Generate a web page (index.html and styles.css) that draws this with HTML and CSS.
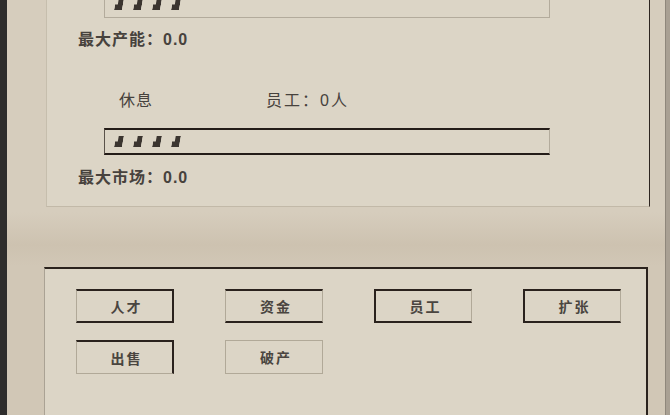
FILE: index.html
```html
<!DOCTYPE html>
<html lang="zh">

<head>
    <meta charset="UTF-8">
    <title>公司</title>
    <link rel="stylesheet" href="styles.css">
</head>

<body>
    <div class="edge-left"></div>

    <div class="main">
        <!-- 生产面板 -->
        <div class="panel-top">
            <div class="bar">
                <span class="mark"></span><span class="mark"></span><span class="mark"></span><span class="mark"></span>
            </div>
            <div class="stat stat-first">最大产能：0.0</div>

            <div class="status-row">
                <span class="status">休息</span>
                <span class="staff">员工：0人</span>
            </div>
            <div class="bar bar-dark">
                <span class="mark"></span><span class="mark"></span><span class="mark"></span><span class="mark"></span>
            </div>
            <div class="stat">最大市场：0.0</div>
        </div>

        <!-- 操作按钮 -->
        <div class="panel-bottom">
            <div class="btn-grid">
                <div class="btn b-right">人才</div>
                <div class="btn b-tb">资金</div>
                <div class="btn b-left">员工</div>
                <div class="btn b-left">扩张</div>
                <div class="btn b-tr">出售</div>
                <div class="btn">破产</div>
            </div>
        </div>
    </div>

    <div class="edge-right"></div>
</body>

</html>
```

FILE: styles.css
```css
body {
    margin: 0;
    padding: 0;
    height: 415px;
    overflow: hidden;
    display: flex;
    font-family: "Liberation Sans", "Noto Sans CJK SC", sans-serif;
    background: linear-gradient(to right, #d4c9b8, #d2c7b6);
    color: #3a3632;
}

.edge-left {
    width: 7px;
    background-color: #2e2d2c;
    flex-shrink: 0;
}

.main {
    width: 659px;
    padding-left: 37px;
    box-sizing: border-box;
    background: linear-gradient(to bottom, #d6cdbd 0, #d6cdbd 212px, #cdc2b0 245px, #d1c7b6 266px);
}

.edge-right {
    width: 4px;
    background-color: #a9a093;
    border-left: 1px solid #8f877b;
    flex-shrink: 0;
}

.panel-top {
    width: 604px;
    margin-left: 2px;
    margin-top: -9px;
    height: 216px;
    box-sizing: border-box;
    background-color: #dcd5c6;
    border-left: 1px solid #c6bead;
    border-right: 1px solid #2d2520;
    border-bottom: 1px solid #c2b9a8;
    padding-left: 31px;
}

.bar {
    width: 446px;
    height: 27px;
    box-sizing: border-box;
    margin-left: 26px;
    border: 1px solid #b3ab9c;
    display: flex;
    align-items: center;
    gap: 11px;
    padding-left: 10px;
}

.bar-dark {
    border-top: 2px solid #241c18;
    border-bottom: 2px solid #241c18;
    border-left: 1px solid #5a524a;
    margin-top: 18px;
}

.mark {
    width: 8px;
    height: 11px;
    background-color: #3b3530;
    transform: skewX(-10deg);
    clip-path: polygon(35% 0, 100% 0, 100% 100%, 0 100%, 0 50%, 35% 50%);
}

.stat {
    font-size: 16px;
    font-weight: bold;
    letter-spacing: 1px;
    line-height: 18px;
    margin-top: 14px;
    color: #47423d;
}

.stat-first {
    margin-top: 13px;
}

.status-row {
    display: flex;
    margin-top: 43px;
    font-size: 16px;
    line-height: 18px;
    letter-spacing: 1px;
    color: #47423d;
}

.status {
    margin-left: 41px;
    width: 147px;
}

.staff {
    letter-spacing: 2px;
}

.panel-bottom {
    width: 604px;
    height: 160px;
    margin-top: 60px;
    box-sizing: border-box;
    background-color: #dcd5c6;
    border-top: 2px solid #2a221d;
    border-left: 1px solid #aaa294;
    border-right: 2px solid #2a221d;
    padding: 20px 0 0 31px;
}

.btn-grid {
    display: grid;
    grid-template-columns: repeat(4, 98px);
    column-gap: 51px;
    row-gap: 17px;
}

.btn {
    height: 34px;
    box-sizing: border-box;
    border: 1px solid #b1a998;
    display: flex;
    align-items: center;
    justify-content: center;
    padding-left: 4px;
    font-size: 14px;
    letter-spacing: 2px;
    font-weight: bold;
    color: #4a4540;
}

.b-right {
    border-top: 2px solid #2a221d;
    border-bottom: 2px solid #2a221d;
    border-right: 2px solid #2a221d;
}

.b-tb {
    border-top: 2px solid #2a221d;
    border-bottom: 2px solid #2a221d;
}

.b-left {
    border-top: 2px solid #2a221d;
    border-bottom: 2px solid #2a221d;
    border-left: 2px solid #2a221d;
}

.b-tr {
    border-top: 2px solid #2a221d;
    border-right: 2px solid #2a221d;
}
```
